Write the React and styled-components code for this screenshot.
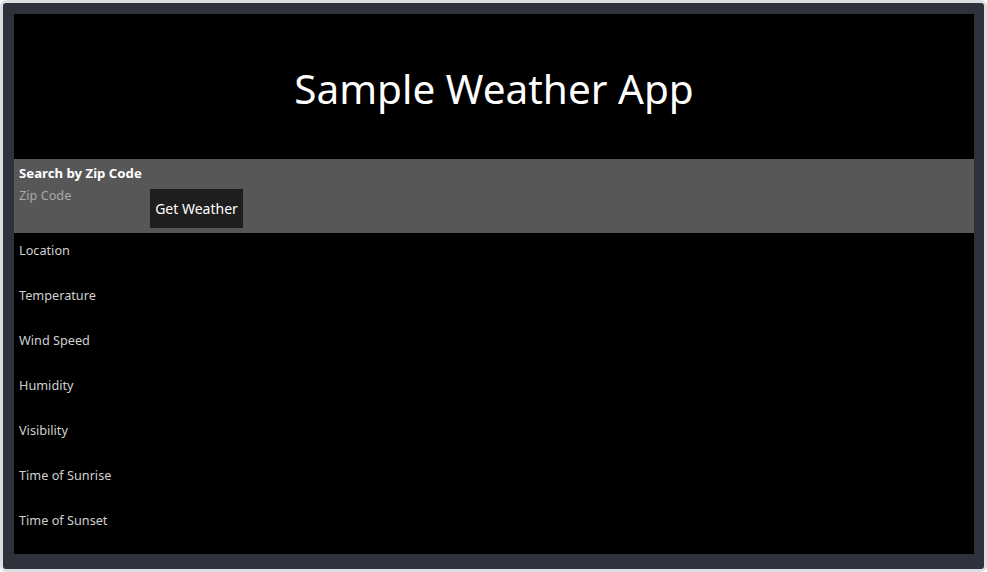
import React from "react";
import styled, { createGlobalStyle } from "styled-components";

const Global = createGlobalStyle`
  html, body { margin: 0; padding: 0; background: #ffffff; }
  body { font-family: "Noto Sans", "Open Sans", sans-serif; }
  * { box-sizing: border-box; }
`;

const Window = styled.div`
  width: 987px;
  height: 572px;
  border: 3px solid #dcdee2;
  border-radius: 6px;
  background: #2e323c;
  padding: 11px 10px 15px 11px;
  display: flex;
`;

const Screen = styled.div`
  flex: 1;
  background: #000;
  display: flex;
  flex-direction: column;
  overflow: hidden;
`;

const Header = styled.header`
  height: 145px;
  display: flex;
  align-items: center;
  justify-content: center;
  padding-top: 3px;
`;

const Title = styled.h1`
  margin: 0;
  font-family: "Noto Sans", sans-serif;
  font-weight: 400;
  font-size: 40.5px;
  color: #ffffff;
`;

const SearchBand = styled.section`
  background: #575757;
  height: 74px;
  padding: 5px;
  display: flex;
  flex-direction: column;
`;

const SearchLabel = styled.div`
  font-size: 13.2px;
  font-weight: 700;
  color: #ffffff;
  line-height: 18px;
`;

const SearchRow = styled.div`
  display: flex;
  align-items: flex-start;
`;

const ZipInput = styled.input`
  width: 131px;
  height: 20px;
  margin-top: 3px;
  padding: 0;
  border: none;
  background: transparent;
  color: #fff;
  font-family: "Noto Sans", sans-serif;
  font-size: 12.7px;
  outline: none;
  &::placeholder { color: #a8a8a8; }
`;

const Button = styled.button`
  width: 93px;
  height: 39px;
  margin-top: 7px;
  background: #1e1e1e;
  border: none;
  color: #ffffff;
  font-family: "Noto Sans", sans-serif;
  font-size: 14px;
  padding: 0;
`;

const Row = styled.div`
  height: 45px;
  padding: 8px 5px 0;
  font-size: 12.7px;
  line-height: 18px;
  color: #d0d0d0;
`;

const fields = [
  "Location",
  "Temperature",
  "Wind Speed",
  "Humidity",
  "Visibility",
  "Time of Sunrise",
  "Time of Sunset",
];

export default function App() {
  return (
    <>
      <Global />
      <Window>
        <Screen>
          <Header>
            <Title>Sample Weather App</Title>
          </Header>
          <SearchBand>
            <SearchLabel>Search by Zip Code</SearchLabel>
            <SearchRow>
              <ZipInput placeholder="Zip Code" />
              <Button>Get Weather</Button>
            </SearchRow>
          </SearchBand>
          {fields.map((f) => (
            <Row key={f}>{f}</Row>
          ))}
        </Screen>
      </Window>
    </>
  );
}
